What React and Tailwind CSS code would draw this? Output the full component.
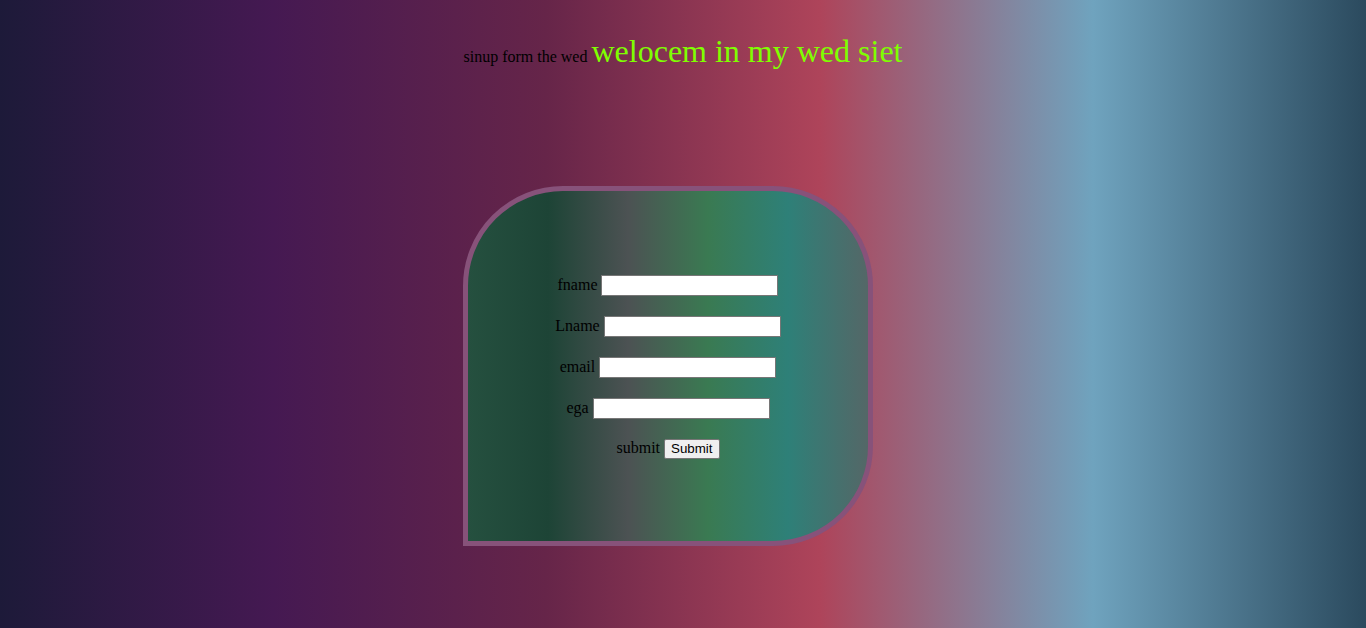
const fields = [
  { label: "fname" },
  { label: "Lname" },
  { label: "email" },
  { label: "ega" },
];

export default function App() {
  return (
    <div className="min-h-[628px] w-full overflow-hidden bg-[linear-gradient(to_right,#1d1a39,#451952,#662549,#ae445a,#6fa3be,#2b4a5e)] font-['Liberation_Serif',serif]">
      <div className="flex items-baseline justify-center pt-[35px] leading-none">
        <span className="text-[16px] text-black">sinup form the wed&nbsp;</span>
        <span className="text-[32px] text-[#7fff00]">welocem in my wed siet</span>
      </div>

      <div className="ml-[463px] mt-[119px] h-[360px] w-[410px] rounded-[100px] rounded-bl-none border-[5px] border-[#87527a] bg-[linear-gradient(to_right,#25503f,#1d4436,#4c5253,#3a7a52,#2e8078,#546767)]">
        <div className="flex flex-col items-center gap-[20px] pt-[84px]">
          {fields.map((f) => (
            <div key={f.label} className="flex h-[21px] items-baseline gap-[4px]">
              <label className="text-[16px] leading-[18px] text-black">{f.label}</label>
              <input
                type="text"
                className="h-[21px] w-[177px] border border-[#767676] bg-white px-[2px] font-['Liberation_Sans',sans-serif] text-[13.33px] outline-none"
              />
            </div>
          ))}
          <div className="flex h-[21px] items-baseline gap-[4px]">
            <span className="text-[16px] leading-[18px] text-black">submit</span>
            <button
              type="button"
              className="h-[20px] rounded-[2px] border border-[#767676] bg-[#efefef] px-[6px] font-['Liberation_Sans',sans-serif] text-[13.33px] leading-none text-black"
            >
              Submit
            </button>
          </div>
        </div>
      </div>
    </div>
  );
}
